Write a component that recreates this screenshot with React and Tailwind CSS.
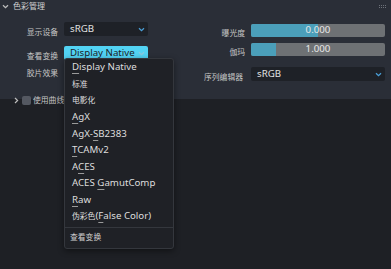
import React from 'react';

const FONT = { fontFamily: '"Noto Sans", "Noto Sans CJK SC", sans-serif' };

// CJK glyphs render noticeably smaller than latin in this UI
function Cj({ children, className = '' }) {
  return <span className={`text-[7.8px] ${className}`}>{children}</span>;
}

function Chevron({ className = '', color = '#4a9fd8' }) {
  return (
    <svg width="7" height="5" viewBox="0 0 7 5" className={className} aria-hidden>
      <path d="M1 1.2 L3.5 3.6 L6 1.2" fill="none" stroke={color} strokeWidth="1.3" />
    </svg>
  );
}

function M({ children }) {
  return <span className="underline decoration-[#9a9a9a] underline-offset-[3px] decoration-1">{children}</span>;
}

function Select({ value, active = false, className = '' }) {
  return (
    <div
      className={`h-[14px] flex items-center justify-between pl-[6px] pr-[3px] rounded-[2px] text-[9.7px] ${
        active ? 'bg-[#52d3f4] text-[#1c2126]' : 'bg-[#1e2127] text-[#e2e2e2]'
      } ${className}`}
    >
      <span className="leading-none">{value}</span>
      <Chevron color={active ? '#8cc8de' : '#4a9fd8'} />
    </div>
  );
}

function Slider({ value, fill }) {
  return (
    <div className="relative h-[13px] w-[134px] rounded-[2px] bg-[#6e7174] overflow-hidden">
      <div className="h-full bg-[#4b9fba]" style={{ width: `${fill}%` }} />
      <span className="absolute inset-0 flex items-center justify-center text-[9.7px] text-[#e8e8e8] leading-none">
        {value}
      </span>
    </div>
  );
}

const items = [
  <><M>D</M>isplay Native</>,
  <Cj>标准</Cj>,
  <Cj>电影化</Cj>,
  <><M>A</M>gX</>,
  <>AgX-<M>S</M>B2383</>,
  <><M>T</M>CAMv2</>,
  <>A<M>C</M>ES</>,
  <>ACES <M>G</M>amutComp</>,
  <><M>R</M>aw</>,
  <><Cj>伪彩色</Cj>(<M>F</M>alse Color)</>,
];

export default function App() {
  return (
    <div className="relative w-[391px] h-[269px] bg-[#1e2025] overflow-hidden text-[#c6c6c6]" style={FONT}>
      <div className="h-[99px] bg-[#2a2e37] flex flex-col">
        {/* header */}
        <div className="h-[12px] flex items-center pl-[2px] justify-between pr-[5px]">
          <div className="flex items-center gap-[4px]">
            <Chevron color="#bdbdbd" />
            <Cj className="text-[#d0d0d0] text-[8px]">色彩管理</Cj>
          </div>
          <div className="grid grid-cols-4 gap-[1px] opacity-60">
            {Array.from({ length: 8 }).map((_, i) => (
              <span key={i} className="w-[1px] h-[1px] bg-[#9aa0a8]" />
            ))}
          </div>
        </div>

        <div className="flex mt-[9px]">
          {/* left column */}
          <div className="flex flex-col w-[206px]">
            <div className="flex items-center gap-[6px]">
              <div className="w-[58px] text-right leading-none"><Cj>显示设备</Cj></div>
              <Select value="sRGB" className="w-[84px]" />
            </div>
            <div className="flex items-center gap-[6px] mt-[8px]">
              <div className="w-[58px] text-right leading-none"><Cj>查看变换</Cj></div>
              <Select value="Display Native" active className="w-[84px]" />
            </div>
            <div className="flex items-center gap-[6px] mt-[2px] h-[14px]">
              <div className="w-[58px] text-right leading-none"><Cj>胶片效果</Cj></div>
            </div>
          </div>

          {/* right column */}
          <div className="flex flex-col pt-[1px]">
            <div className="flex items-center gap-[6px]">
              <div className="w-[39px] text-right leading-none"><Cj>曝光度</Cj></div>
              <Slider value="0.000" fill={50} />
            </div>
            <div className="flex items-center gap-[6px] mt-[3px]">
              <div className="w-[39px] text-right leading-none"><Cj>伽玛</Cj></div>
              <Slider value="1.000" fill={19} />
            </div>
            <div className="flex items-center gap-[8px] mt-[9px] -ml-[2px]">
              <div className="w-[39px] text-right leading-none whitespace-nowrap"><Cj>序列编辑器</Cj></div>
              <Select value="sRGB" className="w-[134px]" />
            </div>
          </div>
        </div>

        {/* curves row */}
        <div className="flex items-center mt-[13px] pl-[14px] gap-[2px]">
          <svg width="5" height="7" viewBox="0 0 5 7" aria-hidden>
            <path d="M1 1 L3.6 3.5 L1 6" fill="none" stroke="#bdbdbd" strokeWidth="1.2" />
          </svg>
          <span className="w-[9px] h-[9px] rounded-[2px] bg-[#545861] ml-[1px]" />
          <Cj>使用曲线</Cj>
        </div>
      </div>

      {/* dropdown menu */}
      <div className="absolute left-[64px] top-[58px] w-[110px] h-[191px] bg-[#1f2126] border border-[#34373d] rounded-[3px] shadow-[0_2px_6px_rgba(0,0,0,0.45)] flex flex-col text-[9.7px] text-[#dedede]">
        <div>
          {items.map((it, i) => (
            <div key={i} className="h-[16.56px] flex items-center pl-[7px] leading-none whitespace-pre">
              <span>{it}</span>
            </div>
          ))}
        </div>
        <div className="mt-[3px] h-px bg-[#34373d]" />
        <div className="h-[19px] flex items-center pl-[5px] text-[#cfcfcf] leading-none">
          <Cj>查看变换</Cj>
        </div>
      </div>
    </div>
  );
}
